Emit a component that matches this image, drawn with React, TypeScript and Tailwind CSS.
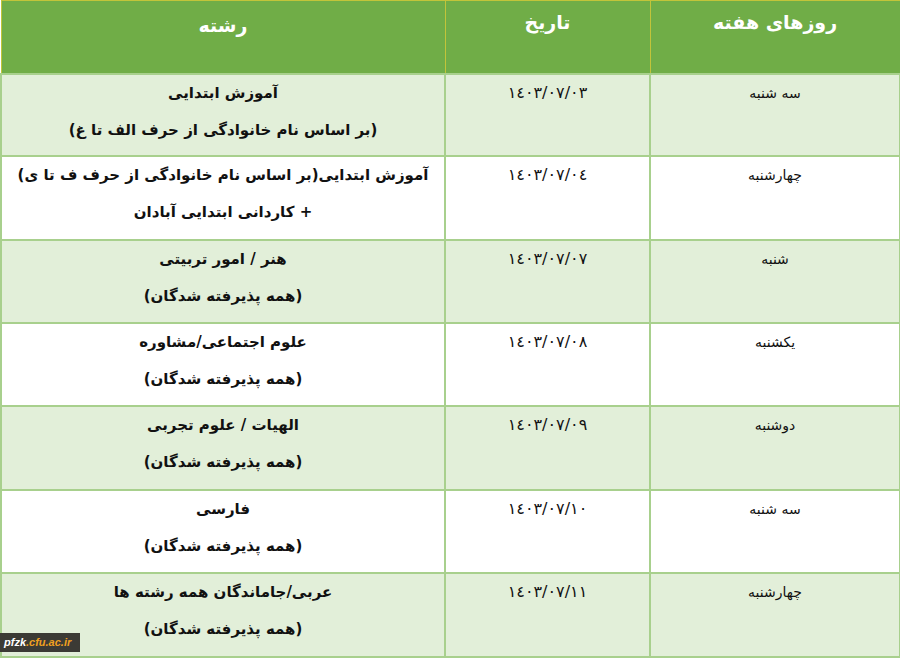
import React from "react";

const rows = [
  { day: "سه شنبه", date: "١٤٠٣/٠٧/٠٣", l1: "آموزش ابتدایی", l2: "(بر اساس نام خانوادگی از حرف الف تا غ)", h: "h-[82px]", bg: "bg-[#e2efd9]" },
  { day: "چهارشنبه", date: "١٤٠٣/٠٧/٠٤", l1: "آموزش ابتدایی(بر اساس نام خانوادگی از حرف ف تا ی)", l2: "+ کاردانی ابتدایی آبادان", h: "h-[84px]", bg: "bg-white" },
  { day: "شنبه", date: "١٤٠٣/٠٧/٠٧", l1: "هنر / امور تربیتی", l2: "(همه پذیرفته شدگان)", h: "h-[83px]", bg: "bg-[#e2efd9]" },
  { day: "یکشنبه", date: "١٤٠٣/٠٧/٠٨", l1: "علوم اجتماعی/مشاوره", l2: "(همه پذیرفته شدگان)", h: "h-[83px]", bg: "bg-white" },
  { day: "دوشنبه", date: "١٤٠٣/٠٧/٠٩", l1: "الهیات / علوم تجربی", l2: "(همه پذیرفته شدگان)", h: "h-[84px]", bg: "bg-[#e2efd9]" },
  { day: "سه شنبه", date: "١٤٠٣/٠٧/١٠", l1: "فارسی", l2: "(همه پذیرفته شدگان)", h: "h-[83px]", bg: "bg-white" },
  { day: "چهارشنبه", date: "١٤٠٣/٠٧/١١", l1: "عربی/جاماندگان همه رشته ها", l2: "(همه پذیرفته شدگان)", h: "h-[84px]", bg: "bg-[#e2efd9]" },
];

export default function App() {
  return (
    <div className="relative w-[900px] h-[660px] bg-white overflow-hidden" style={{ fontFamily: '"DejaVu Sans", sans-serif' }}>
      <table dir="rtl" className="w-[899px] border-collapse table-fixed">
        <colgroup>
          <col className="w-[250px]" />
          <col className="w-[205px]" />
          <col className="w-[444px]" />
        </colgroup>
        <thead>
          <tr className="h-[73px] bg-[#70ad47]">
            <th className="border border-[#c2c43a] border-b-[#a8d08d] align-top pt-[7px] text-white text-[19px] font-bold">روزهای هفته</th>
            <th className="border border-[#c2c43a] border-b-[#a8d08d] align-top pt-[7px] text-white text-[19px] font-bold">تاریخ</th>
            <th className="border border-[#c2c43a] border-b-[#a8d08d] align-top pt-[10px] text-white text-[19px] font-bold">رشته</th>
          </tr>
        </thead>
        <tbody>
          {rows.map((r, i) => (
            <tr key={i} className={`${r.h} ${r.bg}`}>
              <td className="border-2 border-[#a8d08d] align-top text-center pt-[8px] text-[14px] text-[#111]">{r.day}</td>
              <td className="border-2 border-[#a8d08d] align-top text-center pt-[6px] text-[16px] text-[#111]">{r.date}</td>
              <td className="border-2 border-[#a8d08d] align-top text-center pt-0 text-[15px] font-bold text-[#111] leading-[37px]">
                <div>{r.l1}</div>
                <div>{r.l2}</div>
              </td>
            </tr>
          ))}
        </tbody>
      </table>
      <div className="absolute left-0 top-[633px] h-[19px] w-[80px] bg-[#3b3a35] flex items-center pl-[4px] italic font-bold text-[11px] leading-none" style={{ fontFamily: '"Liberation Sans", sans-serif' }}>
        <span className="text-white">pfzk</span>
        <span className="text-[#f0a020]">.cfu.ac.ir</span>
      </div>
    </div>
  );
}
